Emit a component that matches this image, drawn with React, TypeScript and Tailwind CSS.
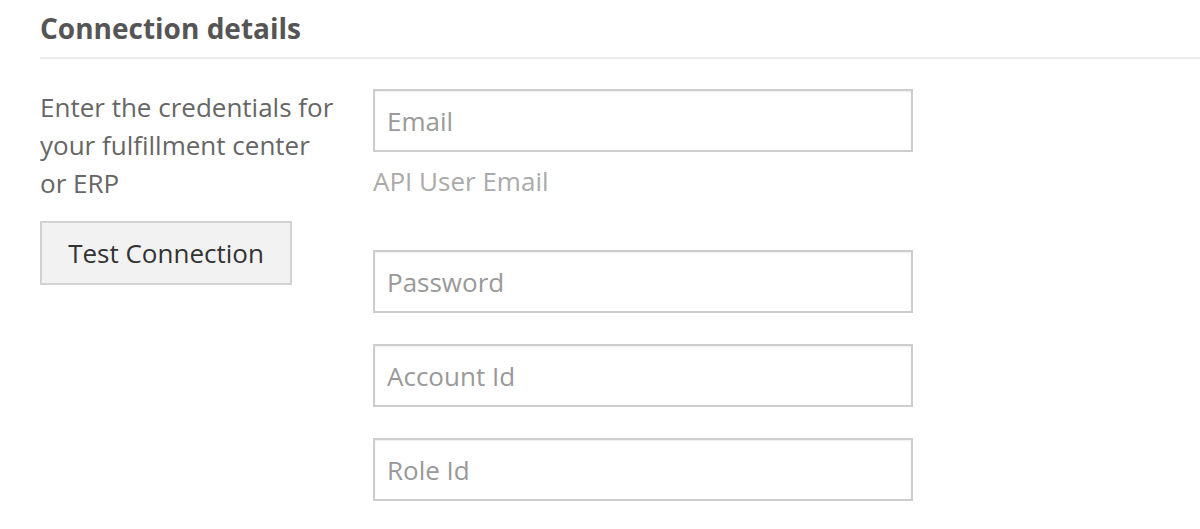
import React from "react";

function Field({ placeholder, className = "" }: { placeholder: string; className?: string }) {
  return (
    <input
      type="text"
      placeholder={placeholder}
      className={
        "block w-[540px] h-[63px] border-2 border-[#cdcdcd] bg-white px-[12px] text-[26px] leading-[38px] text-[#333] placeholder:text-[#999] shadow-[inset_0_1px_2px_rgba(0,0,0,0.07)] outline-none " +
        className
      }
    />
  );
}

export default function App() {
  return (
    <div className="min-h-[529px] bg-white pl-[40px] font-['Open_Sans',sans-serif]">
      <h2 className="pt-[7px] pb-[8px] text-[28px] leading-[42px] font-bold text-[#555] border-b-2 border-[#ebebeb]">
        Connection details
      </h2>
      <div className="flex pt-[29px]">
        <div className="w-[297px] shrink-0">
          <p className="text-[26px] leading-[38px] text-[#666]">
            Enter the credentials for your fulfillment center or ERP
          </p>
          <button
            type="button"
            className="mt-[19px] w-[252px] h-[64px] border-2 border-[#d2d2d2] bg-[#f2f2f2] text-[26px] leading-[38px] text-[#333]"
          >
            Test Connection
          </button>
        </div>
        <div className="ml-[36px] flex flex-col">
          <Field placeholder="Email" className="mt-[1px]" />
          <div className="mt-[10px] text-[26px] leading-[38px] text-[#aaa]">API User Email</div>
          <Field placeholder="Password" className="mt-[50px]" />
          <Field placeholder="Account Id" className="mt-[31px]" />
          <Field placeholder="Role Id" className="mt-[31px]" />
        </div>
      </div>
    </div>
  );
}
